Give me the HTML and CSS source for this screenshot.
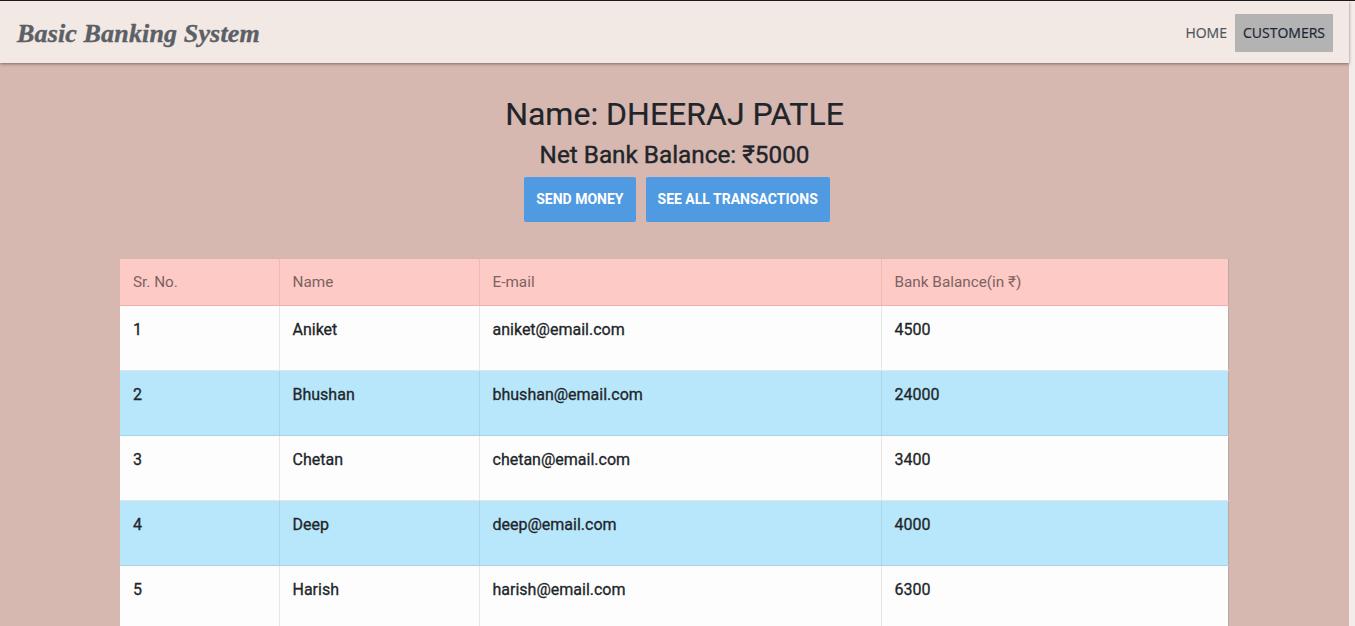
FILE: index.html
```html
<!DOCTYPE html>
<html lang="en">
<head>
<meta charset="utf-8">
<title>Basic Banking System</title>
<link rel="stylesheet" href="styles.css">
</head>
<body>
<div class="page">
  <header class="navbar">
    <a class="brand" href="#">Basic Banking System</a>
    <nav class="nav">
      <a class="nav-link" href="#">HOME</a>
      <a class="nav-link active" href="#">CUSTOMERS</a>
    </nav>
  </header>
  <main class="main">
    <h1 class="title">Name: DHEERAJ PATLE</h1>
    <h2 class="subtitle">Net Bank Balance: ₹5000</h2>
    <div class="actions">
      <a class="btn" href="#">SEND MONEY</a>
      <a class="btn" href="#">SEE ALL TRANSACTIONS</a>
    </div>
    <table class="customers">
      <colgroup>
        <col class="c1"><col class="c2"><col class="c3"><col class="c4">
      </colgroup>
      <thead>
        <tr><th>Sr. No.</th><th>Name</th><th>E-mail</th><th>Bank Balance(in ₹)</th></tr>
      </thead>
      <tbody>
        <tr><td>1</td><td>Aniket</td><td>aniket@email.com</td><td>4500</td></tr>
        <tr class="alt"><td>2</td><td>Bhushan</td><td>bhushan@email.com</td><td>24000</td></tr>
        <tr><td>3</td><td>Chetan</td><td>chetan@email.com</td><td>3400</td></tr>
        <tr class="alt"><td>4</td><td>Deep</td><td>deep@email.com</td><td>4000</td></tr>
        <tr><td>5</td><td>Harish</td><td>harish@email.com</td><td>6300</td></tr>
      </tbody>
    </table>
  </main>
</div>
</body>
</html>
```
FILE: styles.css
```css
html, body {
  margin: 0;
  padding: 0;
  height: 100%;
  overflow: hidden;
}
body {
  background: #f4ece9;
  font-family: Roboto, "Noto Sans", sans-serif;
  border-top: 1px solid #1a1a1a;
  box-sizing: border-box;
}
.page {
  margin-right: 6px;
  background: #d6b8b1;
  min-height: 100%;
}
.navbar {
  height: 62px;
  background: #f3e9e4;
  display: flex;
  align-items: center;
  justify-content: space-between;
  padding: 0 16px 0 17px;
  box-shadow: 0 1px 3px rgba(60, 40, 40, 0.55);
  position: relative;
}
.brand {
  font-family: "Liberation Serif", "DejaVu Serif", serif;
  font-style: italic;
  font-weight: bold;
  font-size: 26px;
  color: #5b6067;
  text-decoration: none;
  letter-spacing: 0.15px;
  padding-top: 4px;
  -webkit-text-stroke: 0.4px currentColor;
}
.nav {
  display: flex;
  align-items: center;
  padding-top: 1px;
}
.nav-link {
  font-family: "Open Sans", "Noto Sans", sans-serif;
  font-size: 14px;
  color: #4f5560;
  text-decoration: none;
  padding: 0 8px;
  line-height: 38px;
  -webkit-text-stroke: 0.2px currentColor;
}
.nav-link.active {
  background: #b3b3b3;
  color: #1c2633;
}
.main {
  padding: 32px 120px 0;
  text-align: center;
}
.title {
  margin: 0;
  font-size: 32px;
  font-weight: 400;
  line-height: 38px;
  color: #212529;
  -webkit-text-stroke: 0.2px currentColor;
}
.subtitle {
  margin: 8px 0 0;
  font-size: 24.3px;
  font-weight: 400;
  line-height: 28px;
  color: #212529;
  -webkit-text-stroke: 0.4px currentColor;
}
.actions {
  margin-top: 8px;
  padding-left: 5px;
  display: flex;
  justify-content: center;
  gap: 10px;
}
.btn {
  display: block;
  background: #4f9ae0;
  color: #fff;
  font-weight: 700;
  font-size: 14px;
  line-height: 45px;
  padding: 0 12px;
  border-radius: 2px;
  text-decoration: none;
}
.customers {
  margin-top: 37px;
  width: 100%;
  border-collapse: collapse;
  table-layout: fixed;
  text-align: left;
  border-right: 1px solid #bfa6a1;
}
.c1 { width: 159px; }
.c2 { width: 200px; }
.c3 { width: 402px; }
.c4 { width: auto; }
.customers th {
  background: #fdcac6;
  color: #7c6262;
  font-weight: 400;
  font-size: 15.3px;
  height: 46px;
  padding: 0 13px;
  border-left: 1px solid #efb9b5;
  border-bottom: 1px solid #f1aea9;
  box-sizing: border-box;
}
.customers th:first-child,
.customers td:first-child { border-left: none; }
.customers td {
  background: #fdfdfd;
  color: #212529;
  font-size: 16px;
  font-weight: 400;
  height: 65px;
  padding: 14px 13px 0;
  vertical-align: top;
  line-height: 20px;
  border-left: 1px solid #e6e6e6;
  border-bottom: 1px solid #dde6ea;
  box-sizing: border-box;
  -webkit-text-stroke: 0.3px currentColor;
}
.customers tr.alt td {
  background: #b8e6fa;
  border-left-color: #a9d6ea;
  border-bottom-color: #a6d3e6;
}
```
